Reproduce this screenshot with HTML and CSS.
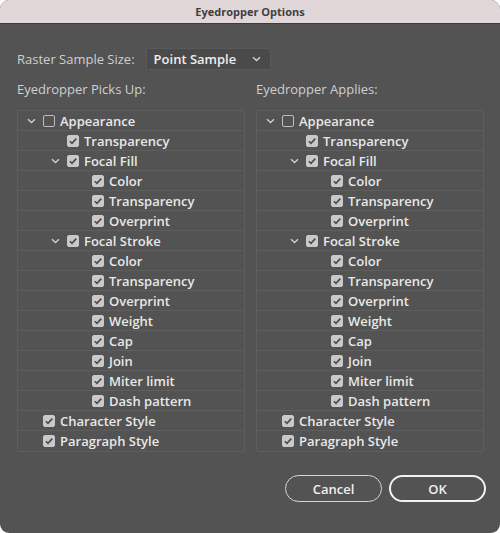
FILE: index.html
```html
<!DOCTYPE html>
<html>
<head>
<meta charset="utf-8">
<link rel="stylesheet" href="styles.css">
</head>
<body>
<div class="window">
  <div class="titlebar">Eyedropper Options</div>
  <div class="content">
    <div class="raster">
      <span class="label">Raster Sample Size:</span>
      <div class="select"><span>Point Sample</span>
        <svg class="chev" width="9" height="6" viewBox="0 0 9 6"><path d="M1 1.2 L4.5 4.5 L8 1.2" fill="none" stroke="#d8d8d8" stroke-width="1.3"/></svg>
      </div>
    </div>
    <div class="cols">
      <div class="col">
        <div class="label head">Eyedropper Picks Up:</div>
        <div class="panel" id="left"></div>
      </div>
      <div class="col">
        <div class="label head">Eyedropper Applies:</div>
        <div class="panel" id="right"></div>
      </div>
    </div>
    <div class="buttons">
      <button class="btn cancel">Cancel</button>
      <button class="btn ok">OK</button>
    </div>
  </div>
</div>
<script src="app.js"></script>
</body>
</html>
```
FILE: app.js
```js
var items = [
  [0, true, false, "Appearance"],
  [1, false, true, "Transparency"],
  [1, true, true, "Focal Fill"],
  [2, false, true, "Color"],
  [2, false, true, "Transparency"],
  [2, false, true, "Overprint"],
  [1, true, true, "Focal Stroke"],
  [2, false, true, "Color"],
  [2, false, true, "Transparency"],
  [2, false, true, "Overprint"],
  [2, false, true, "Weight"],
  [2, false, true, "Cap"],
  [2, false, true, "Join"],
  [2, false, true, "Miter limit"],
  [2, false, true, "Dash pattern"],
  [0, false, true, "Character Style"],
  [0, false, true, "Paragraph Style"]
];
var chev = '<svg width="9" height="6" viewBox="0 0 9 6"><path d="M1 1.2 L4.5 4.5 L8 1.2" fill="none" stroke="#d0d0d0" stroke-width="1.3"/></svg>';
var check = '<svg width="12" height="12" viewBox="0 0 12 12"><path d="M2.8 6.2 L5 8.4 L9.3 3.6" fill="none" stroke="#4a4a4a" stroke-width="1.6"/></svg>';
["left", "right"].forEach(function (id) {
  var p = document.getElementById(id);
  var html = "";
  items.forEach(function (it) {
    html += '<div class="row lvl' + it[0] + '">' +
      '<span class="tw">' + (it[1] ? chev : '') + '</span>' +
      '<span class="cb' + (it[2] ? ' on' : '') + '">' + (it[2] ? check : '') + '</span>' +
      '<span class="txt">' + it[3] + '</span></div>';
  });
  p.innerHTML = html;
});
```
FILE: styles.css
```css
html, body {
  margin: 0;
  padding: 0;
  background: #ffffff;
}
.window {
  width: 500px;
  height: 533px;
  background: #535353;
  border-radius: 9px;
  overflow: hidden;
  font-family: "Open Sans", "DejaVu Sans", sans-serif;
}
.titlebar {
  height: 24px;
  background: #e1d7d9;
  border-bottom: 1px solid #3c3c3c;
  box-sizing: border-box;
  text-align: center;
  font-size: 11px;
  font-weight: 700;
  line-height: 24px;
  color: #3f3f3f;
}
.content {
  padding: 0 14px 0 17px;
}
.raster {
  display: flex;
  align-items: center;
  margin-top: 24px;
  height: 22px;
}
.label {
  color: #cfcfcf;
  font-size: 13px;
  font-weight: 400;
}
.select {
  margin-left: 11px;
  width: 125px;
  height: 22px;
  box-sizing: border-box;
  background: #4a4a4a;
  border: 1px solid #5a5a5a;
  border-radius: 2px;
  display: flex;
  align-items: center;
  justify-content: space-between;
  padding: 0 9px 0 7px;
  color: #eeeeee;
  font-size: 13px;
  font-weight: 600;
}
.cols {
  display: grid;
  grid-template-columns: 228px 228px;
  column-gap: 11px;
  margin-top: 9px;
}
.head {
  height: 20px;
  line-height: 20px;
  margin-bottom: 11px;
}
.panel {
  border: 1px solid #5e5e5e;
  border-radius: 2px;
}
.row {
  height: 20px;
  box-sizing: border-box;
  border-bottom: 1px solid #5e5e5e;
  display: flex;
  align-items: center;
  color: #e8e8e8;
  font-size: 13px;
  font-weight: 600;
}
.row:last-child {
  border-bottom: none;
}
.tw {
  width: 9px;
  height: 6px;
  display: flex;
  margin-right: 7px;
}
.tw svg { display: block; }
.lvl0 .tw { margin-left: 9px; }
.lvl1 .tw { margin-left: 33px; }
.lvl2 .tw { margin-left: 58px; }
.cb {
  width: 12px;
  height: 12px;
  box-sizing: border-box;
  border: 1px solid #bdbdbd;
  border-radius: 2px;
  margin-right: 5px;
  display: flex;
}
.cb.on {
  background: #c9c9c9;
  border-color: #c9c9c9;
}
.cb svg {
  margin: -1px;
  display: block;
}
.buttons {
  display: flex;
  justify-content: flex-end;
  gap: 7px;
  margin-top: 23px;
}
.btn {
  width: 97px;
  height: 27px;
  box-sizing: border-box;
  border-radius: 14px;
  background: #535353;
  color: #efefef;
  font-family: "Open Sans", "DejaVu Sans", sans-serif;
  font-size: 13px;
  font-weight: 600;
  padding: 0;
}
.cancel {
  border: 1px solid #d6d6d6;
}
.ok {
  border: 2px solid #f2f2f2;
}
```
